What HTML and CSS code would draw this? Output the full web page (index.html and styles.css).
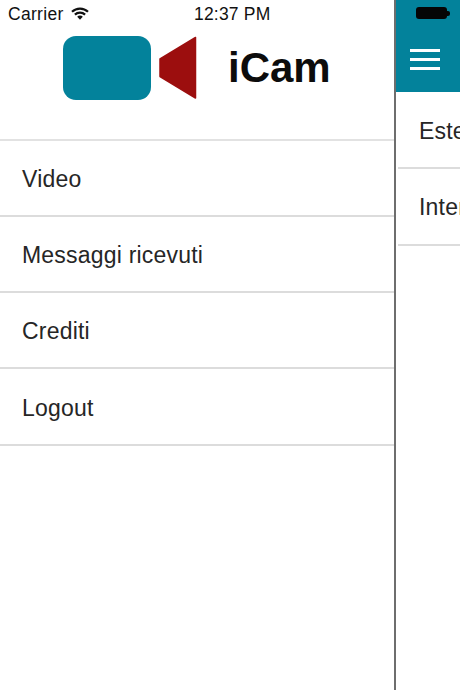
FILE: index.html
```html
<!DOCTYPE html>
<html lang="en">
<head>
    <meta charset="UTF-8">
    <meta name="viewport" content="width=device-width, initial-scale=1.0">
    <title>iCam</title>
    <link rel="stylesheet" href="styles.css">
</head>
<body>
    <div class="screen">
        <div class="menu">
            <div class="status-left">
                <span>Carrier</span>
                <svg class="wifi" width="18" height="13" viewBox="0 0 18 13">
                    <path d="M1 4.800a11.500 11.500 0 0 1 16 0" fill="none" stroke="#111" stroke-width="2.200"/>
                    <path d="M3.900 7.600a7.400 7.400 0 0 1 10.200 0" fill="none" stroke="#111" stroke-width="2.200"/>
                    <path d="M6.200 9.700a3.800 3.800 0 0 1 5.600 0L9 12.800z" fill="#111"/>
                </svg>
            </div>
            <div class="status-time">12:37 PM</div>
            <div class="logo">
                <div class="logo-body"></div>
                <svg class="logo-lens" width="38" height="64" viewBox="0 0 38 64">
                    <path d="M36.500 1.500V62L1 40.500V23z" fill="#9c0e0e" stroke="#9c0e0e" stroke-width="1.500" stroke-linejoin="round"/>
                </svg>
                <span class="logo-name">iCam</span>
            </div>
            <ul class="menu-list">
                <li>Video</li>
                <li>Messaggi ricevuti</li>
                <li>Crediti</li>
                <li>Logout</li>
            </ul>
        </div>
        <div class="main">
            <div class="topbar">
                <div class="battery"><span class="battery-cell"></span><span class="battery-tip"></span></div>
                <div class="burger"><span></span><span></span><span></span></div>
            </div>
            <ul class="main-list">
                <li>Esterno</li>
                <li>Interno</li>
            </ul>
        </div>
    </div>
</body>
</html>
```

FILE: styles.css
```css
html, body {
    margin: 0;
    height: 100%;
    overflow: hidden;
}

body {
    font-family: 'Liberation Sans', Arial, sans-serif;
    background: #fff;
    color: #262626;
}

.screen {
    display: flex;
    width: 460px;
    height: 690px;
    overflow: hidden;
}

.menu {
    position: relative;
    flex: 0 0 394px;
    background: #fff;
}

.status-left {
    position: absolute;
    top: 5px;
    left: 8px;
    display: flex;
    align-items: center;
    gap: 7px;
    font-size: 17.500px;
    letter-spacing: 0.300px;
    line-height: 18px;
    color: #111;
}

.wifi {
    display: block;
    margin-top: -2px;
}

.status-time {
    position: absolute;
    top: 5px;
    left: 194px;
    font-size: 17.500px;
    letter-spacing: 0.200px;
    line-height: 18px;
    color: #111;
}

.logo {
    display: flex;
    align-items: center;
    height: 64px;
    padding: 36px 0 0 63px;
}

.logo-body {
    width: 88px;
    height: 64px;
    background: #03829b;
    border-radius: 13px;
}

.logo-lens {
    display: block;
    margin-left: 8px;
}

.logo-name {
    margin-left: 31px;
    font-size: 42px;
    font-weight: 700;
    color: #0c0c0c;
}

.menu-list, .main-list {
    margin: 0;
    padding: 0;
    list-style: none;
    font-size: 23px;
    letter-spacing: 0.200px;
}

.menu-list {
    margin-top: 38.500px;
    border-top: 2px solid #e2e2e2;
}

.menu-list li, .main-list li {
    display: flex;
    align-items: center;
    box-sizing: border-box;
    height: 76.300px;
    padding-top: 3px;
    border-bottom: 2px solid #dcdcdc;
}

.menu-list li {
    padding-left: 22px;
}

.main {
    flex: 0 0 66px;
    box-sizing: border-box;
    border-left: 2px solid #6e6e6e;
}

.topbar {
    position: relative;
    height: 92px;
    background: #03829b;
}

.battery {
    position: absolute;
    top: 7px;
    left: 20px;
    display: flex;
    align-items: center;
}

.battery-cell {
    width: 31px;
    height: 12px;
    background: #050505;
    border-radius: 3px;
}

.battery-tip {
    width: 3px;
    height: 5px;
    background: #050505;
    border-radius: 0 2px 2px 0;
}

.burger {
    position: absolute;
    top: 49px;
    left: 14px;
    display: flex;
    flex-direction: column;
    gap: 6px;
}

.burger span {
    display: block;
    width: 30px;
    height: 3px;
    background: #fff;
}

.main-list {
    margin: 1px 0 0 2px;
}

.main-list li {
    padding-left: 21px;
    white-space: nowrap;
}
```
